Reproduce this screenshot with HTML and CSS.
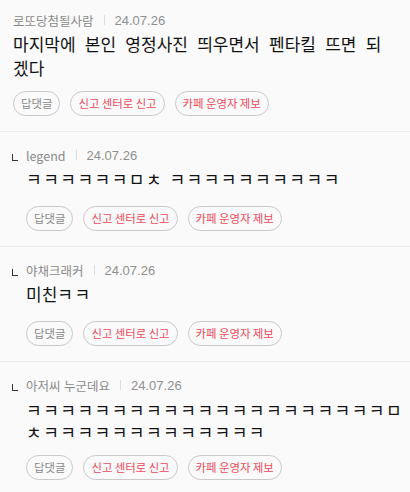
FILE: index.html
```html
<!DOCTYPE html>
<html lang="ko">
<head>
<meta charset="utf-8">
<link rel="stylesheet" href="styles.css">
</head>
<body>
<ul class="comments">
  <li class="comment">
    <div class="meta"><span class="name">로또당첨될사람</span><span class="sep"></span><span class="date">24.07.26</span></div>
    <p class="text">마지막에 본인 영정사진 띄우면서 펜타킬 뜨면 되겠다</p>
    <div class="actions"><button class="btn">답댓글</button><button class="btn red">신고 센터로 신고</button><button class="btn red">카페 운영자 제보</button></div>
  </li>
  <li class="comment reply">
    <div class="meta"><span class="mark"></span><span class="name">legend</span><span class="sep"></span><span class="date">24.07.26</span></div>
    <p class="text jamo">ㅋㅋㅋㅋㅋㅋㅁㅊ ㅋㅋㅋㅋㅋㅋㅋㅋㅋㅋ</p>
    <div class="actions"><button class="btn">답댓글</button><button class="btn red">신고 센터로 신고</button><button class="btn red">카페 운영자 제보</button></div>
  </li>
  <li class="comment reply">
    <div class="meta"><span class="mark"></span><span class="name">야채크래커</span><span class="sep"></span><span class="date">24.07.26</span></div>
    <p class="text">미친<span class="jamo">ㅋㅋ</span></p>
    <div class="actions"><button class="btn">답댓글</button><button class="btn red">신고 센터로 신고</button><button class="btn red">카페 운영자 제보</button></div>
  </li>
  <li class="comment reply last">
    <div class="meta"><span class="mark"></span><span class="name">아저씨 누군데요</span><span class="sep"></span><span class="date">24.07.26</span></div>
    <p class="text jamo tight">ㅋㅋㅋㅋㅋㅋㅋㅋㅋㅋㅋㅋㅋㅋㅋㅋㅋㅋㅋㅋㅋㅁㅊㅋㅋㅋㅋㅋㅋㅋㅋㅋㅋㅋㅋㅋ</p>
    <div class="actions"><button class="btn">답댓글</button><button class="btn red">신고 센터로 신고</button><button class="btn red">카페 운영자 제보</button></div>
  </li>
</ul>
</body>
</html>
```
FILE: styles.css
```css
html, body {
  margin: 0;
  padding: 0;
  background: #fafafa;
}
body {
  font-family: "Noto Sans CJK KR", "Noto Sans", sans-serif;
  color: #111;
}
.comments {
  list-style: none;
  margin: 0;
  padding: 0;
}
.comment {
  padding: 11px 14px 15px 13px;
  border-bottom: 1px solid #ececec;
}
.comment.reply {
  padding: 14px 4px 15px 12px;
}
.comment.last {
  border-bottom: none;
}
.meta {
  display: flex;
  align-items: center;
  height: 18px;
  font-size: 12.5px;
  color: #8a8a8a;
}
.mark {
  width: 6px;
  height: 7px;
  border-left: 1px solid #333;
  border-bottom: 1px solid #333;
  box-sizing: border-box;
  margin: 4px 8px 0 0;
}
.sep {
  width: 1px;
  height: 10px;
  background: #dcdcdc;
  margin: 0 10px;
}
.date {
  font-family: "Liberation Sans", "Noto Sans", sans-serif;
  font-size: 13px;
  color: #8f8f8f;
}
.text {
  margin: 3px 0 0;
  font-size: 17px;
  line-height: 24px;
  word-spacing: 4.5px;
  color: #111;
  word-break: break-all;
}
.jamo {
  letter-spacing: 1.5px;
  word-spacing: 0;
}
.text.tight {
  margin-top: 5px;
  line-height: 22px;
}
.reply .text,
.reply .actions {
  padding-left: 14px;
}
.actions {
  display: flex;
  gap: 10px;
  margin-top: 11px;
}
.reply .actions {
  margin-top: 15px;
}
.reply .tight + .actions {
  margin-top: 12px;
}
.btn {
  height: 25px;
  padding: 0 7px;
  border: 1px solid #c9c9c9;
  border-radius: 13px;
  background: transparent;
  font-family: "Noto Sans CJK KR", "Noto Sans", sans-serif;
  font-size: 11.4px;
  line-height: 23px;
  word-spacing: -0.8px;
  color: #8a8a8a;
}
.btn.red {
  color: #ee4a5c;
}
```
